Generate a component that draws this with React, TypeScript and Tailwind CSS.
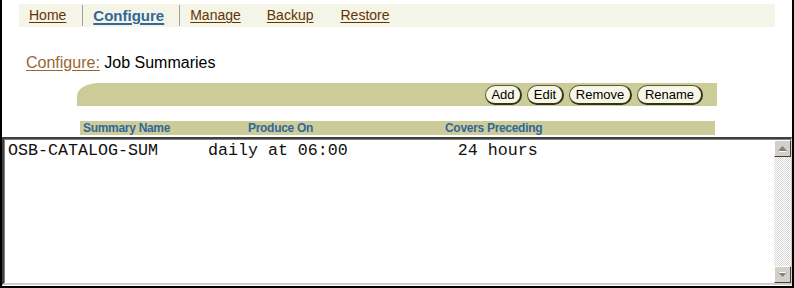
import React from 'react';

const PillButton: React.FC<{ label: string; w: string }> = ({ label, w }) => (
  <div
    className={`${w} h-[20px] rounded-full bg-[#f7f7e7] border border-[#5a5a3a] border-b-2 border-r-2 border-b-[#33331a] border-r-[#33331a] flex items-center justify-center text-[13px] text-black leading-none`}
  >
    {label}
  </div>
);

const Arrow: React.FC<{ up?: boolean }> = ({ up }) => (
  <div className="w-[17px] h-[17px] bg-[#d4d0c8] border border-t-white border-l-white border-r-[#404040] border-b-[#404040] flex items-center justify-center">
    <svg width="9" height="6" viewBox="0 0 9 6">
      {up ? <polygon points="4.5,0 9,5 0,5" fill="#808080" /> : <polygon points="0,0 9,0 4.5,5" fill="#808080" />}
      <line x1="1" y1={up ? 5.5 : 0.5} x2="8" y2={up ? 5.5 : 0.5} stroke="#fff" strokeWidth="1" />
    </svg>
  </div>
);

export default function App() {
  return (
    <div
      className="w-[794px] h-[288px] bg-white border-l-2 border-r-2 border-b-2 border-black flex flex-col overflow-hidden"
      style={{ fontFamily: '"Liberation Sans", Arial, sans-serif' }}
    >
      {/* tab strip */}
      <div className="mt-[4px] ml-[17px] w-[756px] h-[23px] bg-[#f4f5e6] flex items-center text-[14px]">
        <span className="ml-[10px] text-[#663300] underline underline-offset-2">Home</span>
        <span className="ml-[16px] w-px h-[21px] bg-[#a0a0a0]" />
        <span className="ml-[10px] font-bold text-[15px] text-[#336699] underline underline-offset-2 decoration-2 mt-[2px]">Configure</span>
        <span className="ml-[15px] w-px h-[21px] bg-[#a0a0a0]" />
        <span className="ml-[10px] text-[#663300] underline underline-offset-2">Manage</span>
        <span className="ml-[26px] text-[#663300] underline underline-offset-2">Backup</span>
        <span className="ml-[27px] text-[#663300] underline underline-offset-2">Restore</span>
      </div>

      {/* breadcrumb */}
      <div className="mt-[26px] ml-[24px] text-[16px] leading-[19px] text-black">
        <span className="text-[#996633] underline underline-offset-2">Configure:</span> Job Summaries
      </div>

      {/* action bar */}
      <div className="mt-[11px] ml-[75px] w-[640px] h-[23px] bg-[#cccc99] rounded-tl-[22px_13px] flex items-center justify-end pr-[14px] gap-[5px]">
        <PillButton label="Add" w="w-[37px]" />
        <PillButton label="Edit" w="w-[37px]" />
        <PillButton label="Remove" w="w-[63px]" />
        <PillButton label="Rename" w="w-[66px]" />
      </div>

      {/* column headers */}
      <div className="mt-[15px] ml-[78px] w-[635px] h-[14px] bg-[#cccc99] flex items-center text-[12px] font-bold text-[#336699] leading-none">
        <span className="ml-[3px] w-[165px] tracking-[-0.3px]">Summary Name</span>
        <span className="w-[197px] tracking-[-0.3px]">Produce On</span>
        <span className="tracking-[-0.3px]">Covers Preceding</span>
      </div>

      {/* list box */}
      <div className="mt-[2px] flex-1 flex border-t-2 border-l-2 border-t-[#404040] border-l-[#404040] border-b-2 border-r border-b-[#d4d0c8] border-r-[#d4d0c8] mb-[1px]">
        <div className="flex-1 border-t border-l border-t-[#808080] border-l-[#808080] pl-[3px] pt-[1px]">
          <div
            className="whitespace-pre text-[16.67px] leading-[19px] text-[#111]"
            style={{ fontFamily: '"Liberation Mono", "Courier New", monospace' }}
          >
            {'OSB-CATALOG-SUM     daily at 06:00           24 hours'}
          </div>
        </div>
        <div className="w-[17px] flex flex-col border-t border-t-[#808080]">
          <Arrow up />
          <div className="flex-1 bg-[repeating-conic-gradient(#d8d8d8_0_25%,#ffffff_0_50%)] bg-[length:2px_2px]" />
          <Arrow />
        </div>
      </div>
    </div>
  );
}
